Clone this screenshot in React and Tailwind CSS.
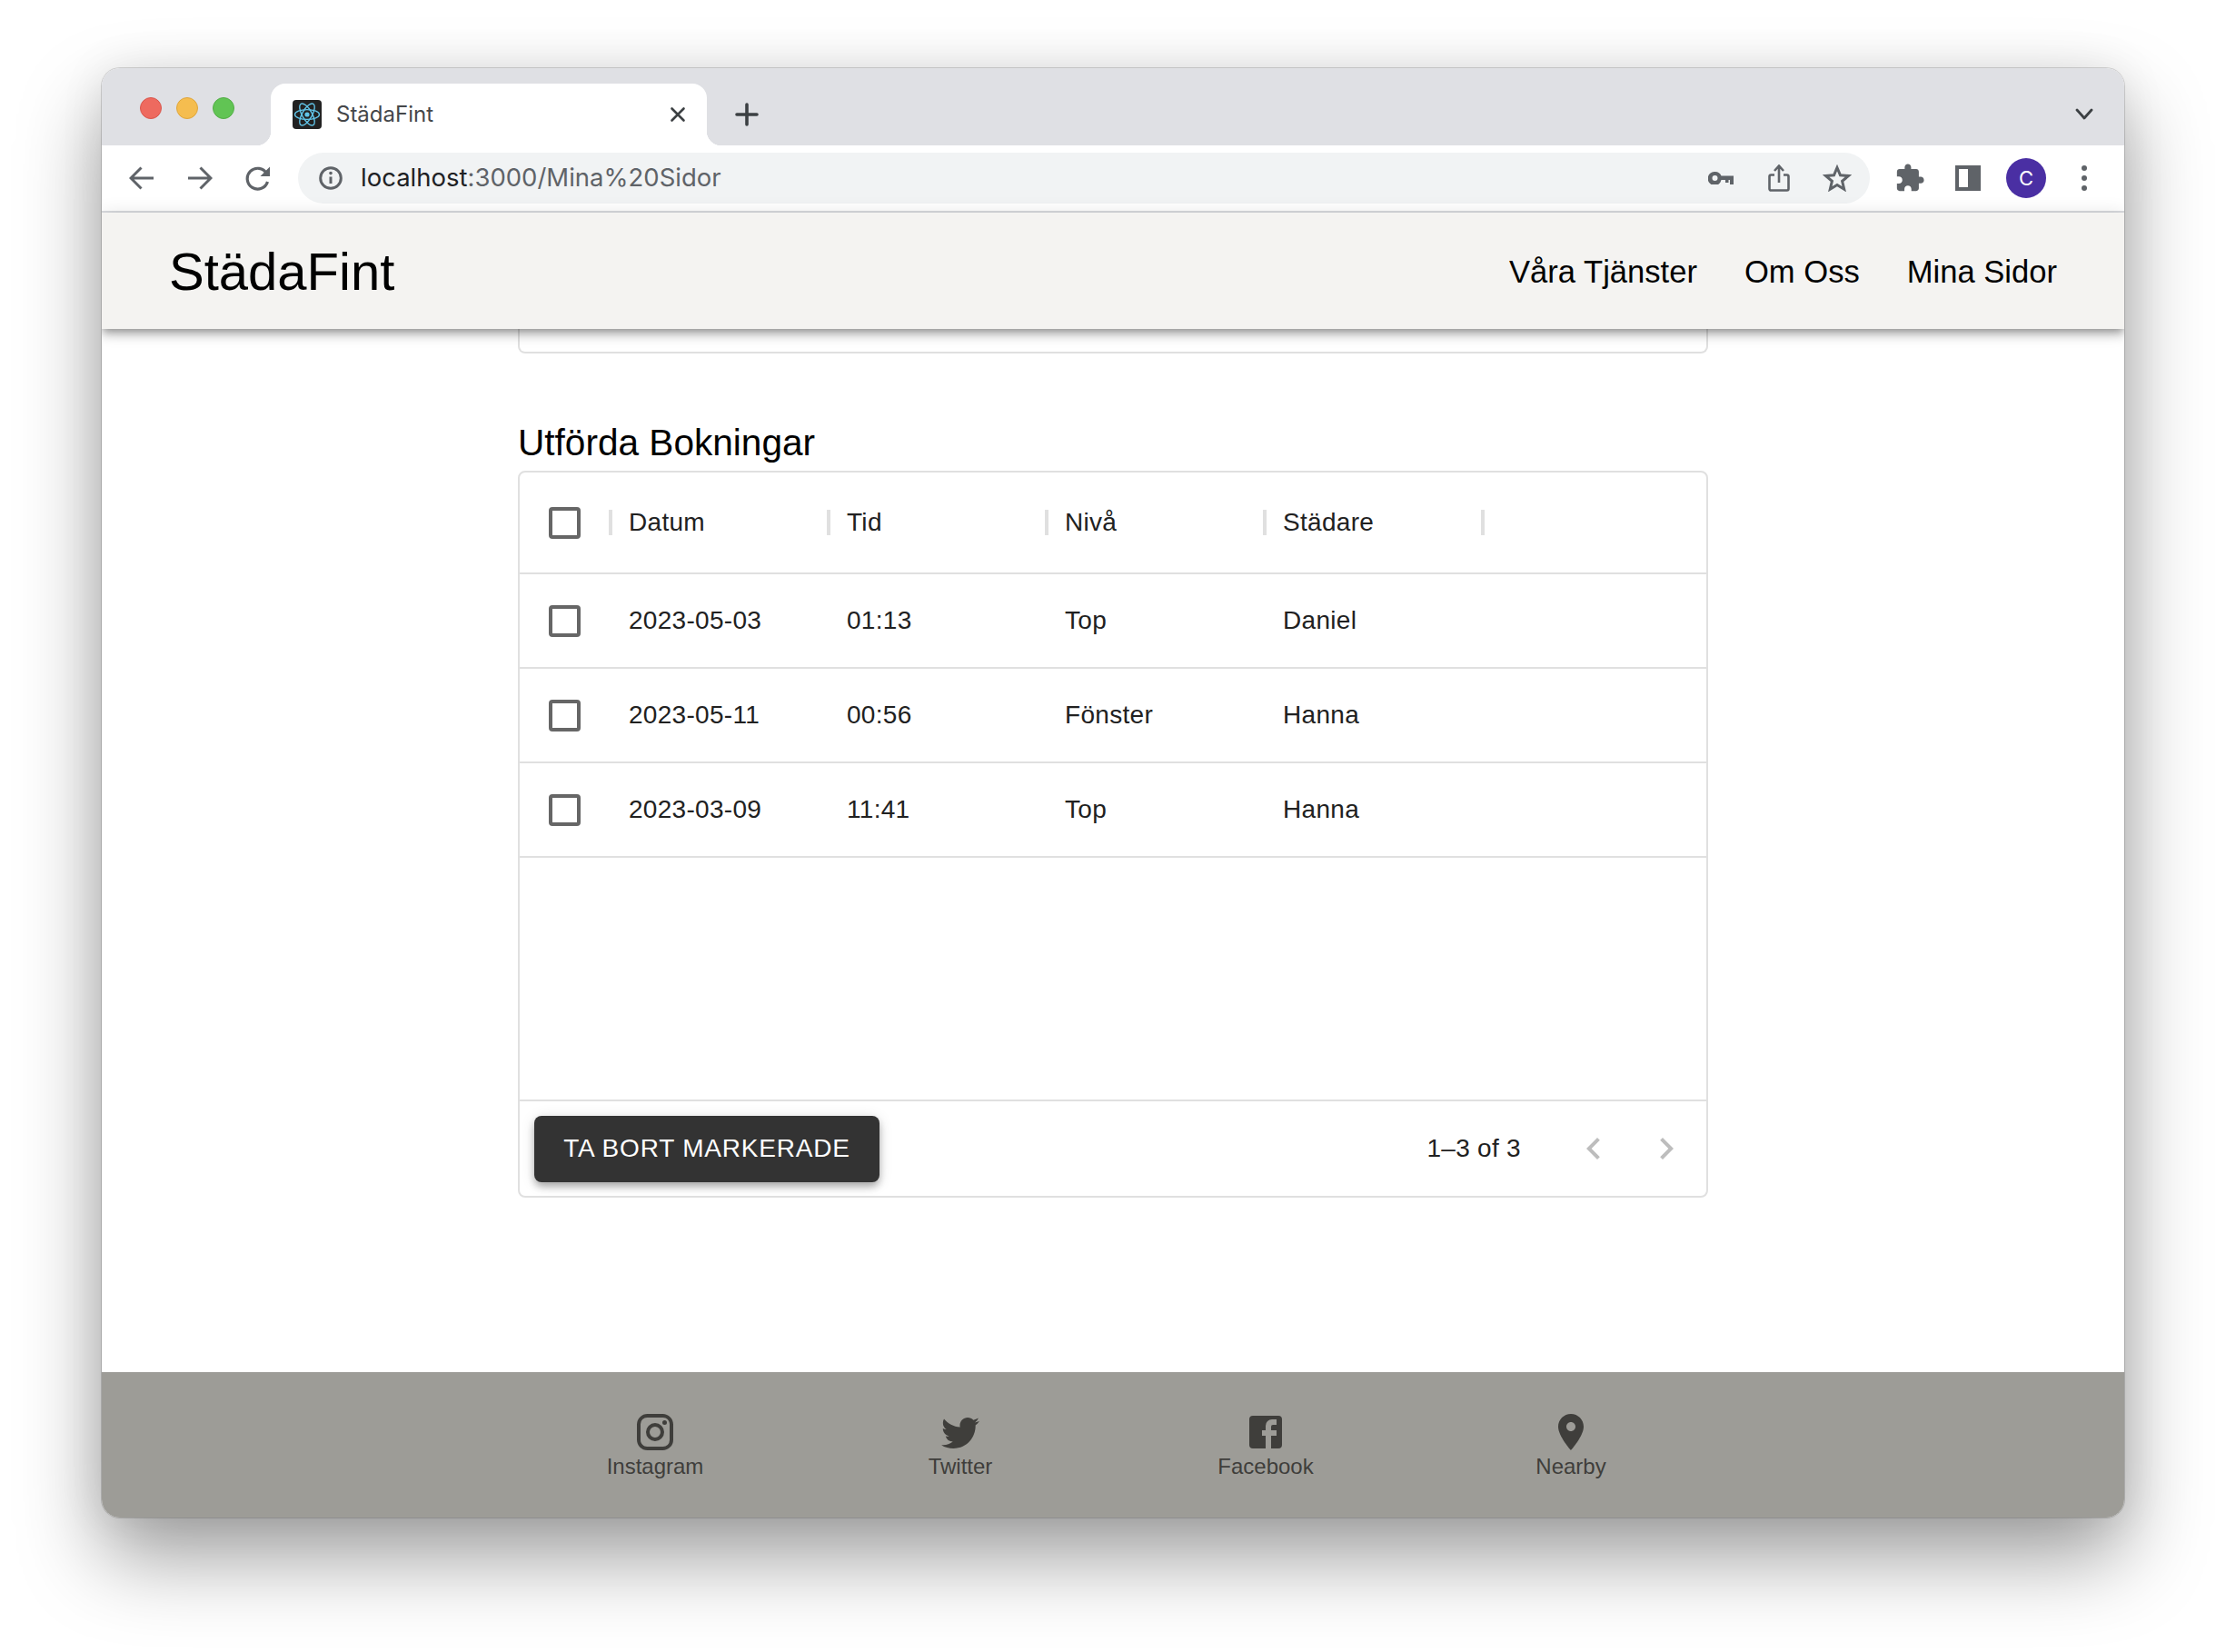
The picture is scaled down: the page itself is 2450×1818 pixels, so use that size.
import React from 'react';

const rows = [
  { date: '2023-05-03', time: '01:13', level: 'Top', cleaner: 'Daniel' },
  { date: '2023-05-11', time: '00:56', level: 'Fönster', cleaner: 'Hanna' },
  { date: '2023-03-09', time: '11:41', level: 'Top', cleaner: 'Hanna' },
];

const footerLinks = [
  {
    label: 'Instagram',
    d: 'M7.8 2h8.4C19.4 2 22 4.6 22 7.8v8.4a5.8 5.8 0 0 1-5.8 5.8H7.8C4.6 22 2 19.4 2 16.2V7.8A5.8 5.8 0 0 1 7.8 2m-.2 2A3.6 3.6 0 0 0 4 7.6v8.8C4 18.39 5.61 20 7.6 20h8.8a3.6 3.6 0 0 0 3.6-3.6V7.6C20 5.61 18.39 4 16.4 4H7.6m9.65 1.5a1.25 1.25 0 0 1 1.25 1.25A1.25 1.25 0 0 1 17.25 8 1.25 1.25 0 0 1 16 6.75a1.25 1.25 0 0 1 1.25-1.25M12 7a5 5 0 0 1 5 5 5 5 0 0 1-5 5 5 5 0 0 1-5-5 5 5 0 0 1 5-5m0 2a3 3 0 0 0-3 3 3 3 0 0 0 3 3 3 3 0 0 0 3-3 3 3 0 0 0-3-3z',
  },
  {
    label: 'Twitter',
    d: 'M22.46 6c-.77.35-1.6.58-2.46.69.88-.53 1.56-1.37 1.88-2.38-.83.5-1.75.85-2.72 1.05C18.37 4.5 17.26 4 16 4c-2.35 0-4.27 1.92-4.27 4.29 0 .34.04.67.11.98C8.28 9.09 5.11 7.38 3 4.79c-.37.63-.58 1.37-.58 2.15 0 1.49.75 2.81 1.91 3.56-.71 0-1.37-.2-1.95-.5v.03c0 2.08 1.48 3.82 3.44 4.21a4.22 4.22 0 0 1-1.93.07 4.28 4.28 0 0 0 4 2.98 8.521 8.521 0 0 1-5.33 1.84c-.34 0-.68-.02-1.02-.06C3.44 20.29 5.7 21 8.12 21 16 21 20.33 14.46 20.33 8.79c0-.19 0-.37-.01-.56.84-.6 1.56-1.36 2.14-2.23z',
  },
  {
    label: 'Facebook',
    d: 'M5 3h14a2 2 0 0 1 2 2v14a2 2 0 0 1-2 2H5a2 2 0 0 1-2-2V5a2 2 0 0 1 2-2m13 2h-2.5A3.5 3.5 0 0 0 12 8.5V11h-2v3h2v7h3v-7h3v-3h-3V9a1 1 0 0 1 1-1h2V5z',
  },
  {
    label: 'Nearby',
    d: 'M12 2C8.13 2 5 5.13 5 9c0 5.25 7 13 7 13s7-7.75 7-13c0-3.87-3.13-7-7-7zm0 9.5c-1.38 0-2.5-1.12-2.5-2.5s1.12-2.5 2.5-2.5 2.5 1.12 2.5 2.5-1.12 2.5-2.5 2.5z',
  },
];

function Checkbox() {
  return <span className="block w-[35px] h-[35px] rounded-[4px] border-[4px] border-[#666666] bg-white" />;
}

function Sep() {
  return <span className="ml-auto -mr-[2px] w-[4px] h-[28px] bg-[#e0e0e0]" />;
}

function ToolSlot({ children }) {
  return <div className="w-[64px] h-[56px] flex items-center justify-center shrink-0">{children}</div>;
}

function ReactFavicon() {
  return (
    <svg width="32" height="32" viewBox="0 0 32 32" className="shrink-0">
      <rect width="32" height="32" rx="4" fill="#222222" />
      <g fill="none" stroke="#61c4e8" strokeWidth="1.4">
        <ellipse cx="16" cy="16" rx="13.5" ry="5.4" />
        <ellipse cx="16" cy="16" rx="13.5" ry="5.4" transform="rotate(60 16 16)" />
        <ellipse cx="16" cy="16" rx="13.5" ry="5.4" transform="rotate(120 16 16)" />
      </g>
      <circle cx="16" cy="16" r="2.6" fill="#61c4e8" />
    </svg>
  );
}

function BrowserTabs() {
  return (
    <div className="h-[85px] bg-[#dfe0e4] flex items-end shrink-0">
      <div className="self-start mt-[32px] ml-[42px] flex gap-[16px]">
        <span className="w-[24px] h-[24px] rounded-full bg-[#ee6a5f] border border-[#d9574d]" />
        <span className="w-[24px] h-[24px] rounded-full bg-[#f5bd4f] border border-[#dfa63c]" />
        <span className="w-[24px] h-[24px] rounded-full bg-[#61c454] border border-[#52ad45]" />
      </div>
      <div className="relative ml-[40px] w-[480px] h-[68px] bg-white rounded-t-[16px] flex items-center pl-[24px] pr-[20px]">
        <span className="absolute -left-[16px] bottom-0 w-[16px] h-[16px] bg-[radial-gradient(circle_at_0_0,#dfe0e4_16px,#ffffff_16.5px)]" />
        <span className="absolute -right-[16px] bottom-0 w-[16px] h-[16px] bg-[radial-gradient(circle_at_100%_0,#dfe0e4_16px,#ffffff_16.5px)]" />
        <ReactFavicon />
        <span className="ml-[16px] flex-1 text-[24px] text-[#45474a] font-['Inter',sans-serif]">StädaFint</span>
        <svg width="24" height="24" viewBox="0 0 24 24" fill="none" stroke="#3c4043" strokeWidth="2.6" strokeLinecap="round">
          <path d="M5.5 5.5l13 13M18.5 5.5l-13 13" />
        </svg>
      </div>
      <svg width="28" height="28" viewBox="0 0 28 28" fill="none" stroke="#3c4043" strokeWidth="3.6" strokeLinecap="round" className="ml-[30px] mb-[20px]">
        <path d="M14 3v22M3 14h22" />
      </svg>
      <svg width="24" height="16" viewBox="0 0 24 16" fill="none" stroke="#3c4043" strokeWidth="2.8" strokeLinecap="round" strokeLinejoin="round" className="ml-auto mr-[32px] mb-[26px]">
        <path d="M4 3l8 9 8-9" />
      </svg>
    </div>
  );
}

function BrowserToolbar() {
  return (
    <div className="h-[74px] bg-white border-b-[2px] border-[#dadce0] flex items-center pl-[12px] shrink-0">
      <ToolSlot>
        <svg width="28" height="26" viewBox="0 0 28 26" fill="none" stroke="#5f6368" strokeWidth="3">
          <path d="M27 13H2.5M13.5 1.5L2 13l11.5 11.5" />
        </svg>
      </ToolSlot>
      <ToolSlot>
        <svg width="28" height="26" viewBox="0 0 28 26" fill="none" stroke="#5f6368" strokeWidth="3">
          <path d="M1 13h24.5M14.5 1.5L26 13 14.5 24.5" />
        </svg>
      </ToolSlot>
      <ToolSlot>
        <svg width="30" height="28" viewBox="0 0 30 28" fill="none">
          <path d="M24.5 9A11.4 11.4 0 1 0 25.5 18" stroke="#5f6368" strokeWidth="3.2" />
          <path d="M28 1.5V12H17.5z" fill="#5f6368" />
        </svg>
      </ToolSlot>
      <div className="ml-[12px] w-[1730px] h-[56px] rounded-full bg-[#f1f3f4] flex items-center pl-[23px] pr-[4px] shrink-0">
        <svg width="26" height="26" viewBox="0 0 26 26" fill="none" stroke="#5f6368" strokeWidth="3" className="shrink-0">
          <circle cx="13" cy="13" r="11.3" />
          <path d="M13 11.5v7.5" />
          <circle cx="13" cy="7.6" r="1.8" fill="#5f6368" stroke="none" />
        </svg>
        <span className="ml-[20px] flex-1 text-[27.5px] text-[#5f6368] font-['Inter',sans-serif]">
          <span className="text-[#202124]">localhost</span>:3000/Mina%20Sidor
        </span>
        <ToolSlot>
          <svg width="28" height="14" viewBox="0 0 28 14" fill="#5f6368">
            <path fillRule="evenodd" d="M7.5 0a7.5 7.5 0 0 1 7 4.5H28V14h-4V9h-1.5v3H19V9h-4.5a7.5 7.5 0 1 1-7-9zm0 4a3 3 0 1 0 0 6 3 3 0 0 0 0-6z" />
          </svg>
        </ToolSlot>
        <ToolSlot>
          <svg width="24" height="30" viewBox="0 0 24 30" fill="none" stroke="#5f6368" strokeWidth="2.6">
            <path d="M7 11.5H3.2a1.7 1.7 0 0 0-1.7 1.7v13.6a1.7 1.7 0 0 0 1.7 1.7h17.6a1.7 1.7 0 0 0 1.7-1.7V13.2a1.7 1.7 0 0 0-1.7-1.7H17" />
            <path d="M12 20V2M7 7l5-5.5L17 7" />
          </svg>
        </ToolSlot>
        <ToolSlot>
          <svg width="32" height="30" viewBox="0 0 32 30" fill="none" stroke="#5f6368" strokeWidth="3" strokeLinejoin="miter">
            <path d="M16 3.5l3.5 8.3 9 .7-6.9 5.9 2.1 8.8-7.7-4.7-7.7 4.7 2.1-8.8-6.9-5.9 9-.7z" />
          </svg>
        </ToolSlot>
      </div>
      <div className="ml-[12px] flex items-center">
        <ToolSlot>
          <svg width="34" height="34" viewBox="0 0 24 24" fill="#5f6368">
            <path d="M20.5 11H19V7c0-1.1-.9-2-2-2h-4V3.5C13 2.12 11.88 1 10.5 1S8 2.12 8 3.5V5H4c-1.1 0-1.99.9-1.99 2v3.8H3.5c1.49 0 2.7 1.21 2.7 2.7s-1.21 2.7-2.7 2.7H2V20c0 1.1.9 2 2 2h3.8v-1.5c0-1.49 1.21-2.7 2.7-2.7 1.49 0 2.7 1.21 2.7 2.7V22H17c1.1 0 2-.9 2-2v-4h1.5c1.38 0 2.5-1.12 2.5-2.5S21.88 11 20.5 11z" />
          </svg>
        </ToolSlot>
        <ToolSlot>
          <span className="block w-[28px] h-[28px] border-[4px] border-r-[14px] border-[#5f6368] bg-white" />
        </ToolSlot>
        <ToolSlot>
          <span className="w-[44px] h-[44px] rounded-full bg-[#4a2fa3] text-white text-[22px] flex items-center justify-center font-['Inter',sans-serif]">C</span>
        </ToolSlot>
        <ToolSlot>
          <span className="flex flex-col gap-[5px]">
            <span className="w-[6px] h-[6px] rounded-full bg-[#5f6368]" />
            <span className="w-[6px] h-[6px] rounded-full bg-[#5f6368]" />
            <span className="w-[6px] h-[6px] rounded-full bg-[#5f6368]" />
          </span>
        </ToolSlot>
      </div>
    </div>
  );
}

function BookingsTable() {
  const cols = 'grid grid-cols-[100px_240px_240px_240px_240px]';
  return (
    <div className="border-[2px] border-[#e0e0e0] rounded-[8px] text-[28px] tracking-[0.01071em] text-[#212121]">
      <div className={`${cols} h-[112px] border-b-[2px] border-[#e0e0e0]`}>
        <div className="flex items-center pl-[32px]"><Checkbox /><Sep /></div>
        {['Datum', 'Tid', 'Nivå', 'Städare'].map(h => (
          <div key={h} className="flex items-center pl-[20px]"><span>{h}</span><Sep /></div>
        ))}
      </div>
      {rows.map(r => (
        <div key={r.date} className={`${cols} h-[104px] border-b-[2px] border-[#e0e0e0]`}>
          <div className="flex items-center pl-[32px]"><Checkbox /></div>
          <div className="flex items-center pl-[20px]">{r.date}</div>
          <div className="flex items-center pl-[20px]">{r.time}</div>
          <div className="flex items-center pl-[20px]">{r.level}</div>
          <div className="flex items-center pl-[20px]">{r.cleaner}</div>
        </div>
      ))}
      <div className="h-[266px]" />
      <div className="h-[106px] border-t-[2px] border-[#e0e0e0] flex items-center pl-[16px] pr-[4px]">
        <button className="w-[380px] h-[73px] rounded-[8px] bg-[#333333] text-white text-[28px] tracking-[0.02857em] shadow-[0_6px_10px_-2px_rgba(0,0,0,0.2),0_4px_8px_rgba(0,0,0,0.14),0_2px_16px_rgba(0,0,0,0.12)]">
          TA BORT MARKERADE
        </button>
        <span className="ml-auto mr-[40px]">1–3 of 3</span>
        <span className="w-[80px] flex justify-center">
          <svg width="48" height="48" viewBox="0 0 24 24" fill="#bdbdbd"><path d="M15.41 16.59 10.83 12l4.58-4.59L14 6l-6 6 6 6 1.41-1.41z" /></svg>
        </span>
        <span className="w-[80px] flex justify-center">
          <svg width="48" height="48" viewBox="0 0 24 24" fill="#bdbdbd"><path d="M8.59 16.59 13.17 12 8.59 7.41 10 6l6 6-6 6-1.41-1.41z" /></svg>
        </span>
      </div>
    </div>
  );
}

export default function App() {
  return (
    <div className="w-[2450px] h-[1818px] bg-white pt-[75px] pl-[112px] overflow-hidden font-['Liberation_Sans',Arial,sans-serif]">
      <div className="w-[2226px] h-[1595px] rounded-[20px] overflow-hidden flex flex-col bg-white shadow-[0_0_0_1px_rgba(0,0,0,0.15),0_44px_90px_rgba(0,0,0,0.38),0_0_50px_rgba(0,0,0,0.08)]">
        <BrowserTabs />
        <BrowserToolbar />

        <nav className="relative z-10 h-[128px] shrink-0 bg-[#f4f3f1] flex items-center justify-between pl-[74px] pr-[74px] text-black shadow-[0_4px_8px_-2px_rgba(0,0,0,0.3),0_8px_10px_rgba(0,0,0,0.14),0_2px_20px_rgba(0,0,0,0.12)]">
          <span className="text-[58px]">StädaFint</span>
          <div className="flex gap-[52px] text-[34.6px] pt-[3px]">
            <span>Våra Tjänster</span>
            <span>Om Oss</span>
            <span>Mina Sidor</span>
          </div>
        </nav>

        <main className="flex-1 w-[1310px] mx-auto">
          <div className="h-[27px] border-x-[2px] border-b-[2px] border-[#e0e0e0] rounded-b-[8px]" />
          <h2 className="mt-[74px] mb-[7px] text-[40.6px] leading-[48px] text-black">Utförda Bokningar</h2>
          <BookingsTable />
        </main>

        <footer className="h-[160px] shrink-0 bg-[#9d9c97] flex justify-center pt-[42px] text-[#3f3e3b]">
          {footerLinks.map(l => (
            <div key={l.label} className="w-[336px] flex flex-col items-center">
              <svg width="48" height="48" viewBox="0 0 24 24" fill="currentColor"><path d={l.d} /></svg>
              <span className="text-[24px] leading-[28px]">{l.label}</span>
            </div>
          ))}
        </footer>
      </div>
    </div>
  );
}
